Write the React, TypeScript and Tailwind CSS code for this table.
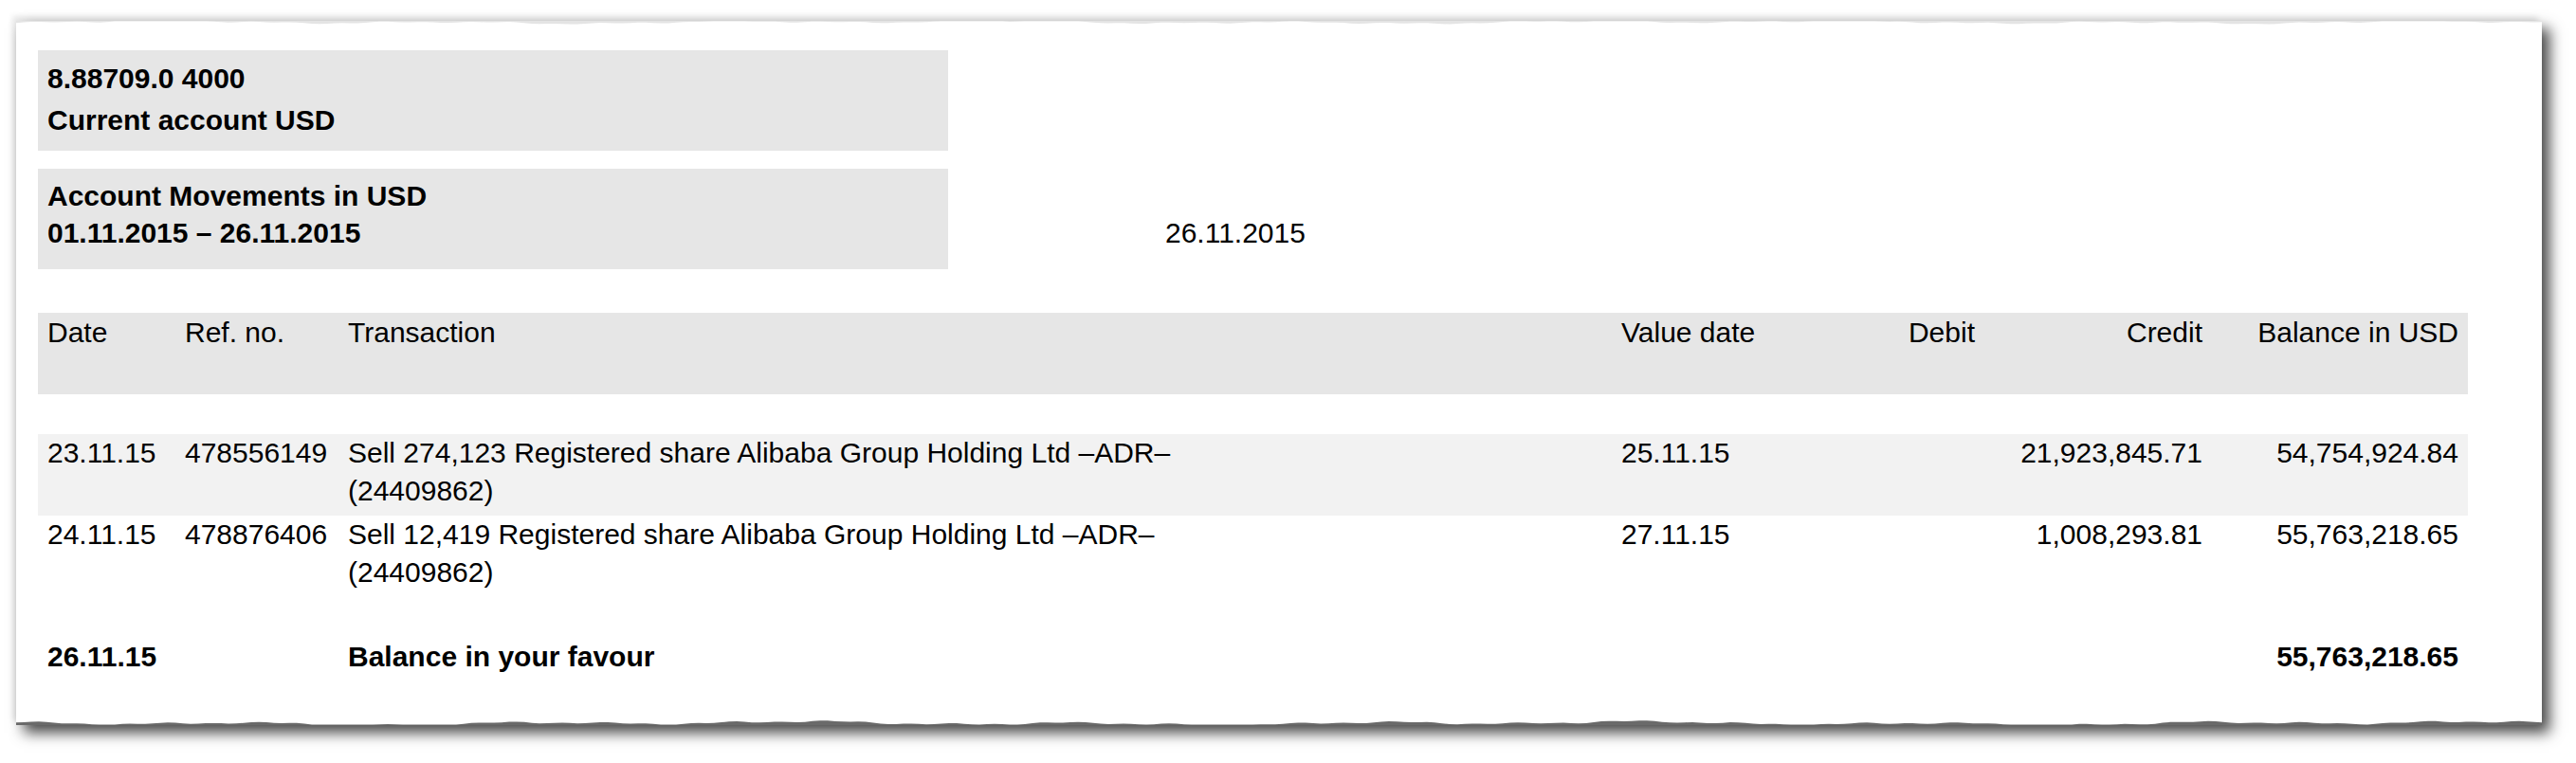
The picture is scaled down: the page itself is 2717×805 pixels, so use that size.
import React from "react";

const PAGE_W = 2664;

function edgePath(width: number, height: number, fromBottom: boolean, amp: number, seed: number) {
  const pts: string[] = [];
  for (let x = 0; x <= width; x += 8) {
    const v =
      0.55 * Math.sin(x / 47 + seed) +
      0.35 * Math.sin(x / 19 + seed * 2.3) +
      0.45 * Math.sin(x / 137 + seed * 3.1) +
      0.25 * Math.sin(x / 7.3 + seed * 1.7);
    const h = Math.max(0.6, amp * (0.45 + 0.5 * v));
    const y = fromBottom ? height - h : h;
    pts.push(`L${x},${y.toFixed(2)}`);
  }
  if (fromBottom) {
    return `M0,${height} ${pts.join(" ")} L${width},${height} Z`;
  }
  return `M0,0 ${pts.join(" ")} L${width},0 Z`;
}

const topPath = edgePath(PAGE_W, 8, false, 3.2, 1.3);
const bottomPath = edgePath(PAGE_W, 8, true, 4.2, 2.7);

const cols = "grid grid-cols-[145px_172px_1343px_200px_193px_240px_270px]";

type Row = {
  date: string;
  ref: string;
  tx: string[];
  value: string;
  debit: string;
  credit: string;
  balance: string;
  shaded: boolean;
};

const rows: Row[] = [
  {
    date: "23.11.15",
    ref: "478556149",
    tx: ["Sell 274,123 Registered share Alibaba Group Holding Ltd \u2013ADR\u2013", "(24409862)"],
    value: "25.11.15",
    debit: "",
    credit: "21,923,845.71",
    balance: "54,754,924.84",
    shaded: true,
  },
  {
    date: "24.11.15",
    ref: "478876406",
    tx: ["Sell 12,419 Registered share Alibaba Group Holding Ltd \u2013ADR\u2013", "(24409862)"],
    value: "27.11.15",
    debit: "",
    credit: "1,008,293.81",
    balance: "55,763,218.65",
    shaded: false,
  },
];

export default function App() {
  return (
    <div className="min-h-[805px] w-[2717px] bg-white pt-[22px] pl-[17px]">
      <div className="relative h-[743px] w-[2664px] bg-white pt-[31px] pl-[23px] font-['Liberation_Sans',Arial,Helvetica,sans-serif] text-[30px] text-black shadow-[8px_8px_14px_rgba(0,0,0,0.72),-4px_-5px_6px_rgba(0,0,0,0.09)]">
        <svg
          className="pointer-events-none absolute left-0 top-0"
          width={PAGE_W}
          height={8}
          viewBox={`0 0 ${PAGE_W} 8`}
        >
          <path d={topPath} fill="#e4e4e4" />
        </svg>
        <svg
          className="pointer-events-none absolute bottom-0 left-0"
          width={PAGE_W}
          height={8}
          viewBox={`0 0 ${PAGE_W} 8`}
        >
          <path d={bottomPath} fill="#6a6a6a" />
        </svg>

        <div className="w-[960px] bg-[#e6e6e6] pt-[8px] pb-[10px] pl-[10px] font-bold leading-[44px]">
          <div>8.88709.0 4000</div>
          <div>Current account USD</div>
        </div>

        <div className="mt-[19px] flex items-end">
          <div className="w-[960px] bg-[#e6e6e6] pt-[9px] pb-[19px] pl-[10px] font-bold leading-[39px]">
            <div>Account Movements in USD</div>
            <div>01.11.2015 {"\u2013"} 26.11.2015</div>
          </div>
          <div className="ml-[229px] pb-[19px] leading-[39px]">26.11.2015</div>
        </div>

        <div className="mt-[46px] w-[2563px] leading-[40px]">
          <div className={`${cols} h-[86px] bg-[#e6e6e6] pt-[1px]`}>
            <div className="pl-[10px]">Date</div>
            <div className="pl-[10px]">Ref. no.</div>
            <div className="pl-[10px]">Transaction</div>
            <div className="pl-[10px]">Value date</div>
            <div className="pr-[10px] text-right">Debit</div>
            <div className="pr-[10px] text-right">Credit</div>
            <div className="pr-[10px] text-right">Balance in USD</div>
          </div>

          <div className="mt-[42px]">
            {rows.map((r) => (
              <div
                key={r.ref}
                className={`${cols} h-[86px] ${r.shaded ? "bg-[#f2f2f2]" : "bg-white"}`}
              >
                <div className="pl-[10px]">{r.date}</div>
                <div className="pl-[10px]">{r.ref}</div>
                <div className="pl-[10px] whitespace-nowrap">
                  {r.tx.map((t) => (
                    <div key={t}>{t}</div>
                  ))}
                </div>
                <div className="pl-[10px]">{r.value}</div>
                <div className="pr-[10px] text-right">{r.debit}</div>
                <div className="pr-[10px] text-right">{r.credit}</div>
                <div className="pr-[10px] text-right">{r.balance}</div>
              </div>
            ))}
          </div>

          <div className={`${cols} mt-[43px] font-bold`}>
            <div className="pl-[10px]">26.11.15</div>
            <div className="pl-[10px]"></div>
            <div className="pl-[10px]">Balance in your favour</div>
            <div className="pl-[10px]"></div>
            <div className="pr-[10px] text-right"></div>
            <div className="pr-[10px] text-right"></div>
            <div className="pr-[10px] text-right">55,763,218.65</div>
          </div>
        </div>
      </div>
    </div>
  );
}
